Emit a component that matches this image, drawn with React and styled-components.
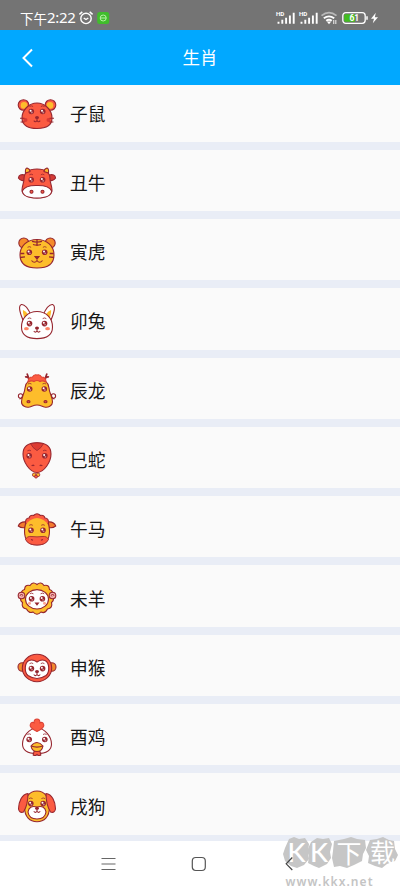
import styled, { createGlobalStyle } from "styled-components";

const GlobalStyle = createGlobalStyle`
  * {
    box-sizing: border-box;
  }
  body {
    margin: 0;
    font-family: "Noto Sans CJK SC", "Noto Sans", sans-serif;
    background-color: #fff;
  }
`;

const Phone = styled.div`
  position: relative;
  display: flex;
  flex-direction: column;
  width: 400px;
  height: 889px;
  overflow: hidden;
  background-color: #fff;
`;

// Status Bar

const StatusBarContainer = styled.div`
  display: flex;
  flex: none;
  justify-content: space-between;
  align-items: center;
  height: 30px;
  padding: 6px 21px 0 20px;
  background-color: #747474;
  color: #fff;
`;

const StatusGroup = styled.div`
  display: flex;
  align-items: center;
`;

const Period = styled.span`
  font-size: 13.5px;
  font-weight: 400;
  line-height: 20px;
`;

const Clock = styled.span`
  margin: -2px 3px 0 0;
  font-family: "Noto Sans", sans-serif;
  font-size: 15px;
  font-weight: 400;
  line-height: 20px;
  letter-spacing: -0.3px;
`;

const Icon = styled.svg`
  display: block;
  flex: none;
  overflow: visible;
`;

const Signal = () => (
  <Icon width="20" height="14" viewBox="0 0 20 14">
    <text x="-1" y="5" fontFamily="Roboto" fontSize="6.2" fontWeight="700" fill="#fff">
      HD
    </text>
    <path
      d="M1.5 12.8V10.8M5.3 12.8V8.8M9.100 12.8V6.8M12.900 12.8V4.6M16.7 12.8V1.8"
      stroke="#fff"
      strokeWidth="1.900"
    />
  </Icon>
);

const StatusBar = () => (
  <StatusBarContainer>
    <StatusGroup>
      <Period>下午</Period>
      <Clock>2:22</Clock>
      <Icon width="15" height="14" viewBox="0 0 15 14" fill="none" stroke="#fff" strokeWidth="1.4">
        <circle cx="7" cy="7.4" r="5.2" />
        <path d="M.4 3.4 3.3.9M10.700 .9l2.9 2.5M4.700 7l2.3 1.5L9.3 7" />
      </Icon>
      <Icon width="18" height="12" viewBox="0 0 18 12">
        <rect x="3.200" y="0" width="12" height="12" rx="2.5" fill="#40bd2c" />
        <circle cx="9.200" cy="6" r="3" fill="none" stroke="#b7f3a5" />
        <path d="M6.200 6h6" stroke="#b7f3a5" />
      </Icon>
    </StatusGroup>
    <StatusGroup>
      <Signal />
      <Icon width="3" height="1" />
      <Signal />
      <Icon width="22" height="14" viewBox="0 0 22 14" fill="none" strokeWidth="1.8">
        <path d="M1.500 4.6Q9-1.2 16.500 4.6" stroke="#b9b9b9" />
        <path d="M3.800 7.3q5.2-4 10.4 0M6.200 9.8q2.8-2.1 5.6 0" stroke="#fff" />
        <path d="m6.800 10.5 2.2 2.7 2.2-2.7z" fill="#fff" />
        <path d="M13.700 9v4M15.800 9v4" stroke="#ddd" strokeWidth="1.2" />
      </Icon>
      <Icon width="27" height="12" viewBox="0 0 27 12">
        <rect x=".8" y=".7" width="22.4" height="10.6" rx="3" fill="none" stroke="#fff" strokeWidth="1.3" />
        <path d="M3.200 2.3H13v7.4H3.200q-1 0-1-1V3.3q0-1 1-1z" fill="#43bd20" />
        <path d="M25 4.2v3.6" stroke="#fff" strokeWidth="1.5" />
        <text x="12.3" y="9" textAnchor="middle" fontFamily="Roboto" fontSize="8.500" fontWeight="700" fill="#fff">
          61
        </text>
      </Icon>
      <Icon width="10" height="12" viewBox="0 0 10 12">
        <path d="M6.8.7 2 6.8h3L3.8 11.3 9 5.2H5.8z" fill="#fff" />
      </Icon>
    </StatusGroup>
  </StatusBarContainer>
);

// Title Bar

const Header = styled.header`
  display: grid;
  flex: none;
  grid-template-columns: 60px 1fr 60px;
  align-items: center;
  height: 55.4px;
  background-color: #01a8ff;
  color: #fff;
`;

const BackButton = styled.button`
  padding: 0 0 0 21px;
  border: none;
  background: none;
`;

const Title = styled.h1`
  margin: -2px 0 0;
  font-size: 17.5px;
  font-weight: 400;
  line-height: 26px;
  text-align: center;
`;

// Zodiac List

const ListWindow = styled.main`
  flex: none;
  height: 755.6px;
  overflow: hidden;
`;

const List = styled.ul`
  margin: -5px 0 0;
  padding: 0;
  list-style: none;
`;

const Row = styled.li`
  display: flex;
  align-items: center;
  gap: 13px;
  height: 69.3px;
  padding: 6px 17px 0;
  border-bottom: 8px solid #e9edf6;
  background-color: #fafafa;
`;

const AnimalName = styled.span`
  margin-top: -3px;
  font-size: 17.7px;
  line-height: 26px;
  color: #151515;
`;

const LINE = "#96262f";
const RED = "#fb5b42";
const YELLOW = "#fdbd2b";

const Eyes = ({ left, right, y }) =>
  [left, right].map((x) => (
    <g key={x} stroke="none">
      <circle cx={x} cy={y} r="2.8" fill={LINE} />
      <circle cx={x + 0.6} cy={y + 1} r="0.9" fill="#c9868b" />
      <circle cx={x - 0.7} cy={y - 0.8} r="1" fill="#fff" />
      <path
        d={`M${x - 1.8} ${y - 5}q1.800-1.300 3.600 0`}
        fill="none"
        stroke={LINE}
        strokeWidth="0.8"
      />
    </g>
  ));

const Mouth = ({ x = 20, y }) => (
  <>
    <ellipse cx={x} cy={y} rx="2" ry="1.5" fill={LINE} stroke="none" />
    <path d={`M${x} ${y}v3m-3.200 0q1.600 2.200 3.200 0q1.600 2.200 3.200 0`} fill="none" />
  </>
);

const Rat = () => (
  <>
    <g fill={RED}>
      <circle cx="6.5" cy="11" r="5.3" />
      <circle cx="33.5" cy="11" r="5.3" />
    </g>
    <g fill={YELLOW} stroke="none">
      <circle cx="7" cy="11.4" r="3.3" />
      <circle cx="33" cy="11.4" r="3.3" />
    </g>
    <path d="M20 9C28 9 35 16 35 24C35 32 28 34.5 20 34.5S5 32 5 24C5 16 12 9 20 9z" fill={RED} />
    <g fill="#d93a35" stroke="none">
      <circle cx="8.500" cy="26" r="2" />
      <circle cx="31.500" cy="26" r="2" />
    </g>
    <Eyes left={14.3} right={25.7} y={17.5} />
    <Mouth y={23.6} />
    <path d="M3 24.3h4.5M3.6 28h4M32.5 24.3H37M32.4 28h4" />
  </>
);

const Ox = () => (
  <>
    <path d="M8 12Q2 10.500 1.400 15Q4 19 8 17zM32 12Q38 10.500 38.600 15Q36 19 32 17z" fill="#d53b36" />
    <path d="M20 6C28 6 33 9 33 16C33 20 35 23 35 27C35 32 28 35 20 35S5 32 5 27C5 23 7 20 7 16C7 9 12 6 20 6z" fill={RED} />
    <path d="M8.500 10Q8 5.500 10 5Q13 6 13 8.500zM31.500 10Q32 5.500 30 5Q27 6 27 8.500z" fill={YELLOW} />
    <path d="M5.300 28Q8 22.200 20 22.500Q32 22.200 34.700 28Q34 35 20 35T5.300 28z" fill="#fff" />
    <Eyes left={14.2} right={25.6} y={16.8} />
    <g fill={RED}>
      <circle cx="14.5" cy="28.7" r="1.5" />
      <circle cx="25.5" cy="28.7" r="1.5" />
    </g>
  </>
);

const Tiger = () => (
  <>
    <g fill="#f58b2b">
      <circle cx="6.8" cy="10" r="5" />
      <circle cx="33.2" cy="10" r="5" />
    </g>
    <path d="M20 6.500C30 6.500 37 13 37 22C37 31 30 35 20 35S3 31 3 22C3 13 10 6.500 20 6.500z" fill={YELLOW} />
    <path d="M15 8.300q5 1.500 10 0M16 11.500q4 1.200 8 0M20 7v6M3.300 20.500h4M3 24.500l5-.7M36.700 20.500h-4M37 24.500l-5-.7" fill="none" strokeWidth="1.3" />
    <Eyes left={12.3} right={27.7} y={19.3} />
    <path d="M18 23.500h4L20 26z" fill={LINE} />
    <path d="M14.500 27.500q3 3.500 5.500 0q2.500 3.500 5.500 0" fill="none" />
  </>
);

const Rabbit = () => (
  <>
    <path d="M6 18Q0 4 4.500 2.500Q9 2 14 13zM34 18Q40 4 35.500 2.500Q31 2 26 13z" fill="#fff" />
    <path d="M7 15.500Q5.500 9 6 8Q9 9 11.500 13zM33 15.500Q34.500 9 34 8Q31 9 28.500 13z" fill={YELLOW} stroke="none" />
    <path d="M20 9.500C29 9.500 35.500 16 35.500 25C35.500 34 28 36.600 20 36.600S4.500 34 4.500 25C4.500 16 11 9.500 20 9.500z" fill="#fff" />
    <Eyes left={12.5} right={27.5} y={21.6} />
    <g fill="#ff8667" stroke="none">
      <ellipse cx="9.4" cy="26.7" rx="2.400" ry="1.600" />
      <ellipse cx="30.6" cy="26.7" rx="2.400" ry="1.600" />
    </g>
    <Mouth y={26} />
  </>
);

const Dragon = () => (
  <>
    <path d="M13 9Q11 5 8 6M11.500 6.500L10 2.500M27 9Q29 5 32 6M28.500 6.500L30 2.500" fill="none" strokeWidth="1.700" />
    <g fill="#fff">
      <circle cx="3.6" cy="25" r="2.200" />
      <circle cx="36.4" cy="25" r="2.200" />
    </g>
    <path d="M2.500 28q3-.5 3-4M37.500 28q-3-.5-3-4" fill="none" />
    <path d="M20 8C27 8 31.500 11 32 17C32.400 23 35.500 25 35.500 31C35.500 35 31 36.800 27.500 36C24 34.800 23 34 20 34S16 34.800 12.500 36C9 36.800 4.500 35 4.500 31C4.500 25 7.600 23 8 17C8.500 11 13 8 20 8z" fill={YELLOW} />
    <path d="M11 11Q11 6 15.500 6Q17 3 20 4Q23 3 24.500 6Q29 6 29 11Q25 9 23 10.500Q20 8.500 17 10.500Q15 9 11 11z" fill={RED} stroke="#dd4334" />
    <Eyes left={12.7} right={27.3} y={18} />
    <g fill={RED}>
      <ellipse cx="11.5" cy="30.7" rx="1.500" ry="1.100" />
      <ellipse cx="28.5" cy="30.7" rx="1.500" ry="1.100" />
    </g>
  </>
);

const Snake = () => (
  <>
    <g fill={YELLOW} strokeWidth=".8">
      <circle cx="17.2" cy="33.800" r="1.800" />
      <circle cx="21" cy="33.800" r="1.800" />
      <circle cx="19" cy="35.600" r="1.500" fill={RED} />
    </g>
    <path d="M20 1.700C29 1.700 34 5 34 13C34 21 27 31.500 20 31.500S6 21 6 13C6 5 11 1.700 20 1.700z" fill={RED} />
    <path d="M13.500 2.500Q20 1 26.500 2.500Q24.500 7 20 9.600Q15.500 7 13.500 2.500z" fill="#dd3b32" strokeWidth=".8" />
    <Eyes left={12.2} right={27.8} y={14.8} />
    <path d="M14.700 25q1-1.500 2.600-.3M22.700 24.700q1.600-1.200 2.600.3" fill="none" />
  </>
);

const Horse = () => (
  <>
    <path d="M10 12Q3 11 1.300 16Q5 19 10 17zM30 12Q37 11 38.700 16Q35 19 30 17z" fill="#f47b2f" />
    <path d="M8.500 14Q8 8 12 8Q13 4.500 16.500 5.500Q20 2 23.500 5.500Q27 4.500 28 8Q32 8 31.500 14z" fill={RED} />
    <path d="M20 8C28 9 32.500 14 32.500 21C32.500 30 28 35 20 35S7.500 30 7.500 21C7.500 14 12 9 20 8z" fill={YELLOW} stroke="none" />
    <path d="M8.500 14Q7.500 17 7.500 21C7.500 30 12 35 20 35S32.500 30 32.500 21Q32.500 17 31.500 14" fill="none" />
    <path d="M8.500 29.500Q10 25.800 15 26.500Q20 27.200 25 26.500Q30 25.800 31.500 29.500Q29 35 20 35T8.500 29.500z" fill={RED} strokeWidth=".8" />
    <Eyes left={14} right={26} y={20.3} />
    <path d="M14 29.500l2 .8M26 29.500l-2 .8" />
  </>
);

const Sheep = () => (
  <>
    <path
      d="M20 5.500Q24 2 27 6.500Q32 5 32.500 10.500Q37 12 35 16.500Q38 21 34.500 23.500Q36 29 30.500 30Q28 35 24 33Q20 37.500 16 33Q12 35 9.500 30Q4 29 5.500 23.500Q2 21 5 16.500Q3 12 7.500 10.500Q8 5 13 6.500Q16 2 20 5.500z"
      fill={YELLOW}
    />
    <g fill="#f3b1ae">
      <circle cx="4.5" cy="16.5" r="3.300" />
      <circle cx="35.5" cy="16.5" r="3.300" />
      <path d="M3 17q0-2 2-1.500t0 2M37 17q0-2-2-1.500t0 2" fill="none" strokeWidth=".8" />
    </g>
    <ellipse cx="20" cy="20.300" rx="11.500" ry="9.700" fill="#fff" />
    <Eyes left={14.6} right={25.4} y={19.8} />
    <path d="M18.600 24h2.800L20 25.800z" fill={LINE} />
    <g fill="#ffa48f" stroke="none">
      <circle cx="12.5" cy="24.300" r="1.500" />
      <circle cx="27.5" cy="24.300" r="1.500" />
    </g>
  </>
);

const Monkey = () => (
  <>
    <g fill="#f18a2c">
      <circle cx="5.3" cy="19" r="4.300" />
      <circle cx="34.7" cy="19" r="4.300" />
    </g>
    <ellipse cx="20" cy="20" rx="14.700" ry="13.700" fill={RED} />
    <path d="M20 14Q24 11 28 12.500C32.500 14.500 33 24 29 27.500Q20 33.500 11 27.500C7 24 7.500 14.500 12 12.500Q16 11 20 14z" fill="#fff" />
    <Eyes left={14.4} right={25.6} y={20.6} />
    <Mouth y={23.5} />
  </>
);

const Rooster = () => (
  <>
    <path d="M20 10C28 10 34.500 19 34.500 26C34.500 33 28 35.500 20 35.500S5.500 33 5.500 26C5.500 19 12 10 20 10z" fill="#fff" />
    <path d="M20 13.500Q12 9.500 13.300 6.500Q14.500 3.500 17 4.800Q17 1 20 1T23 4.800Q25.500 3.500 26.700 6.500Q28 9.500 20 13.500z" fill={RED} stroke="#dc4033" />
    <Eyes left={12.2} right={27.8} y={21.5} />
    <path d="M17 33.500l-.8 3.500q2 1.300 3.800-.5q1.800 1.800 3.800.5L23 33.500z" fill={RED} />
    <path d="M14 28Q17 24.500 20 24.500T26 28Q25 33.500 20 33.500T14 28z" fill={YELLOW} />
    <path d="M14 28q6 2.200 12 0" fill="none" />
  </>
);

const Dog = () => (
  <>
    <path d="M20 4C28 4 32.500 11 32.500 20C32.500 30 27 34.700 20 34.700S7.500 30 7.500 20C7.500 11 12 4 20 4z" fill={YELLOW} />
    <path d="M11 6.500C5 7 1.500 15 1.500 22Q2.500 26.500 6.500 25C9 21 11 13 11 6.500zM29 6.500C35 7 38.500 15 38.500 22Q37.500 26.500 33.500 25C31 21 29 13 29 6.500z" fill={RED} />
    <Eyes left={13.8} right={26.2} y={16.6} />
    <path d="M20 20Q28 18 29 25Q28 32 20 32T11 25Q12 18 20 20z" fill="#fff" />
    <Mouth y={21.3} />
  </>
);

const animals = [
  { name: "子鼠", Face: Rat },
  { name: "丑牛", Face: Ox },
  { name: "寅虎", Face: Tiger },
  { name: "卯兔", Face: Rabbit },
  { name: "辰龙", Face: Dragon },
  { name: "巳蛇", Face: Snake },
  { name: "午马", Face: Horse },
  { name: "未羊", Face: Sheep },
  { name: "申猴", Face: Monkey },
  { name: "酉鸡", Face: Rooster },
  { name: "戌狗", Face: Dog },
];

// Navigation Bar

const NavigationBar = styled.nav`
  display: flex;
  flex: 1;
  gap: 76px;
  padding: 15px 0 0 101px;
`;

// Watermark

const Watermark = styled.div`
  position: absolute;
  right: 2px;
  bottom: 0;
  width: 114px;
`;

export default function App() {
  return (
    <>
      <GlobalStyle />
      <Phone>
        <StatusBar />
        <Header>
          <BackButton aria-label="返回">
            <Icon width="12" height="20" viewBox="0 0 12 20" fill="none" stroke="#fff" strokeWidth="2">
              <path d="M11 1.500 2.500 10 11 18.500" />
            </Icon>
          </BackButton>
          <Title>生肖</Title>
        </Header>
        <ListWindow>
          <List>
            {animals.map(({ name, Face }) => (
              <Row key={name}>
                <Icon width="40" height="40" viewBox="0 0 40 40" stroke={LINE} strokeWidth="1.1">
                  <Face />
                </Icon>
                <AnimalName>{name}</AnimalName>
              </Row>
            ))}
          </List>
        </ListWindow>
        <NavigationBar>
          <Icon width="15" height="16" viewBox="0 0 15 16" stroke="#666" strokeWidth="1.1">
            <path d="M.5 2.500h14M.5 8h14M.5 13.500h14" />
          </Icon>
          <Icon width="15" height="16" viewBox="0 0 15 16" fill="none" stroke="#555" strokeWidth="1.2">
            <rect x=".3" y="1.500" width="13" height="13" rx="3.500" />
          </Icon>
        </NavigationBar>
        <Watermark>
          <Icon width="114" height="53" viewBox="0 0 114 53">
            <g fill="#c6c6c6">
              <path d="M5 3 10 1l5 2 6-1 4 6-1 8 1 7-5 6-7 3-6-2-6-5-2-7 2-6z" />
              <path d="m27 6 6-4 6 1 6-1 3 6-2 8 1 6-4 6-8 4-5-2-6-3 1-7-2-5z" />
              <path d="m50 5 10-2 7-2 6 2 8 1 1 8-3 6-1 7-8 4-7 3-7-2-6 1-2-9 1-7z" />
              <path d="m86 4 7-1 6-2 6 3 5 1 1 8 3 6-3 6-8 3-5 4-7-2-7-3 1-7-3-6z" />
            </g>
            <g fill="#fff" fontSize="25" fontWeight="400">
              <text x="3.500" y="25.500" fontFamily="Lato" fontSize="27" fontWeight="500">K</text>
              <text x="26" y="25.500" fontFamily="Lato" fontSize="27" fontWeight="500">K</text>
              <text x="52.500" y="26.500">下</text>
              <text x="86" y="26">载</text>
            </g>
            <path d="M8.300 21.500 2.200 27.800l6.100 6.200" fill="none" stroke="#444" strokeWidth="1.2" />
            <text
              x="1.500"
              y="49.500"
              textLength="87"
              fill="#c4c4c4"
              fontFamily="Noto Sans, sans-serif"
              fontSize="12"
              fontWeight="600"
            >
              www.kkx.net
            </text>
          </Icon>
        </Watermark>
      </Phone>
    </>
  );
}
